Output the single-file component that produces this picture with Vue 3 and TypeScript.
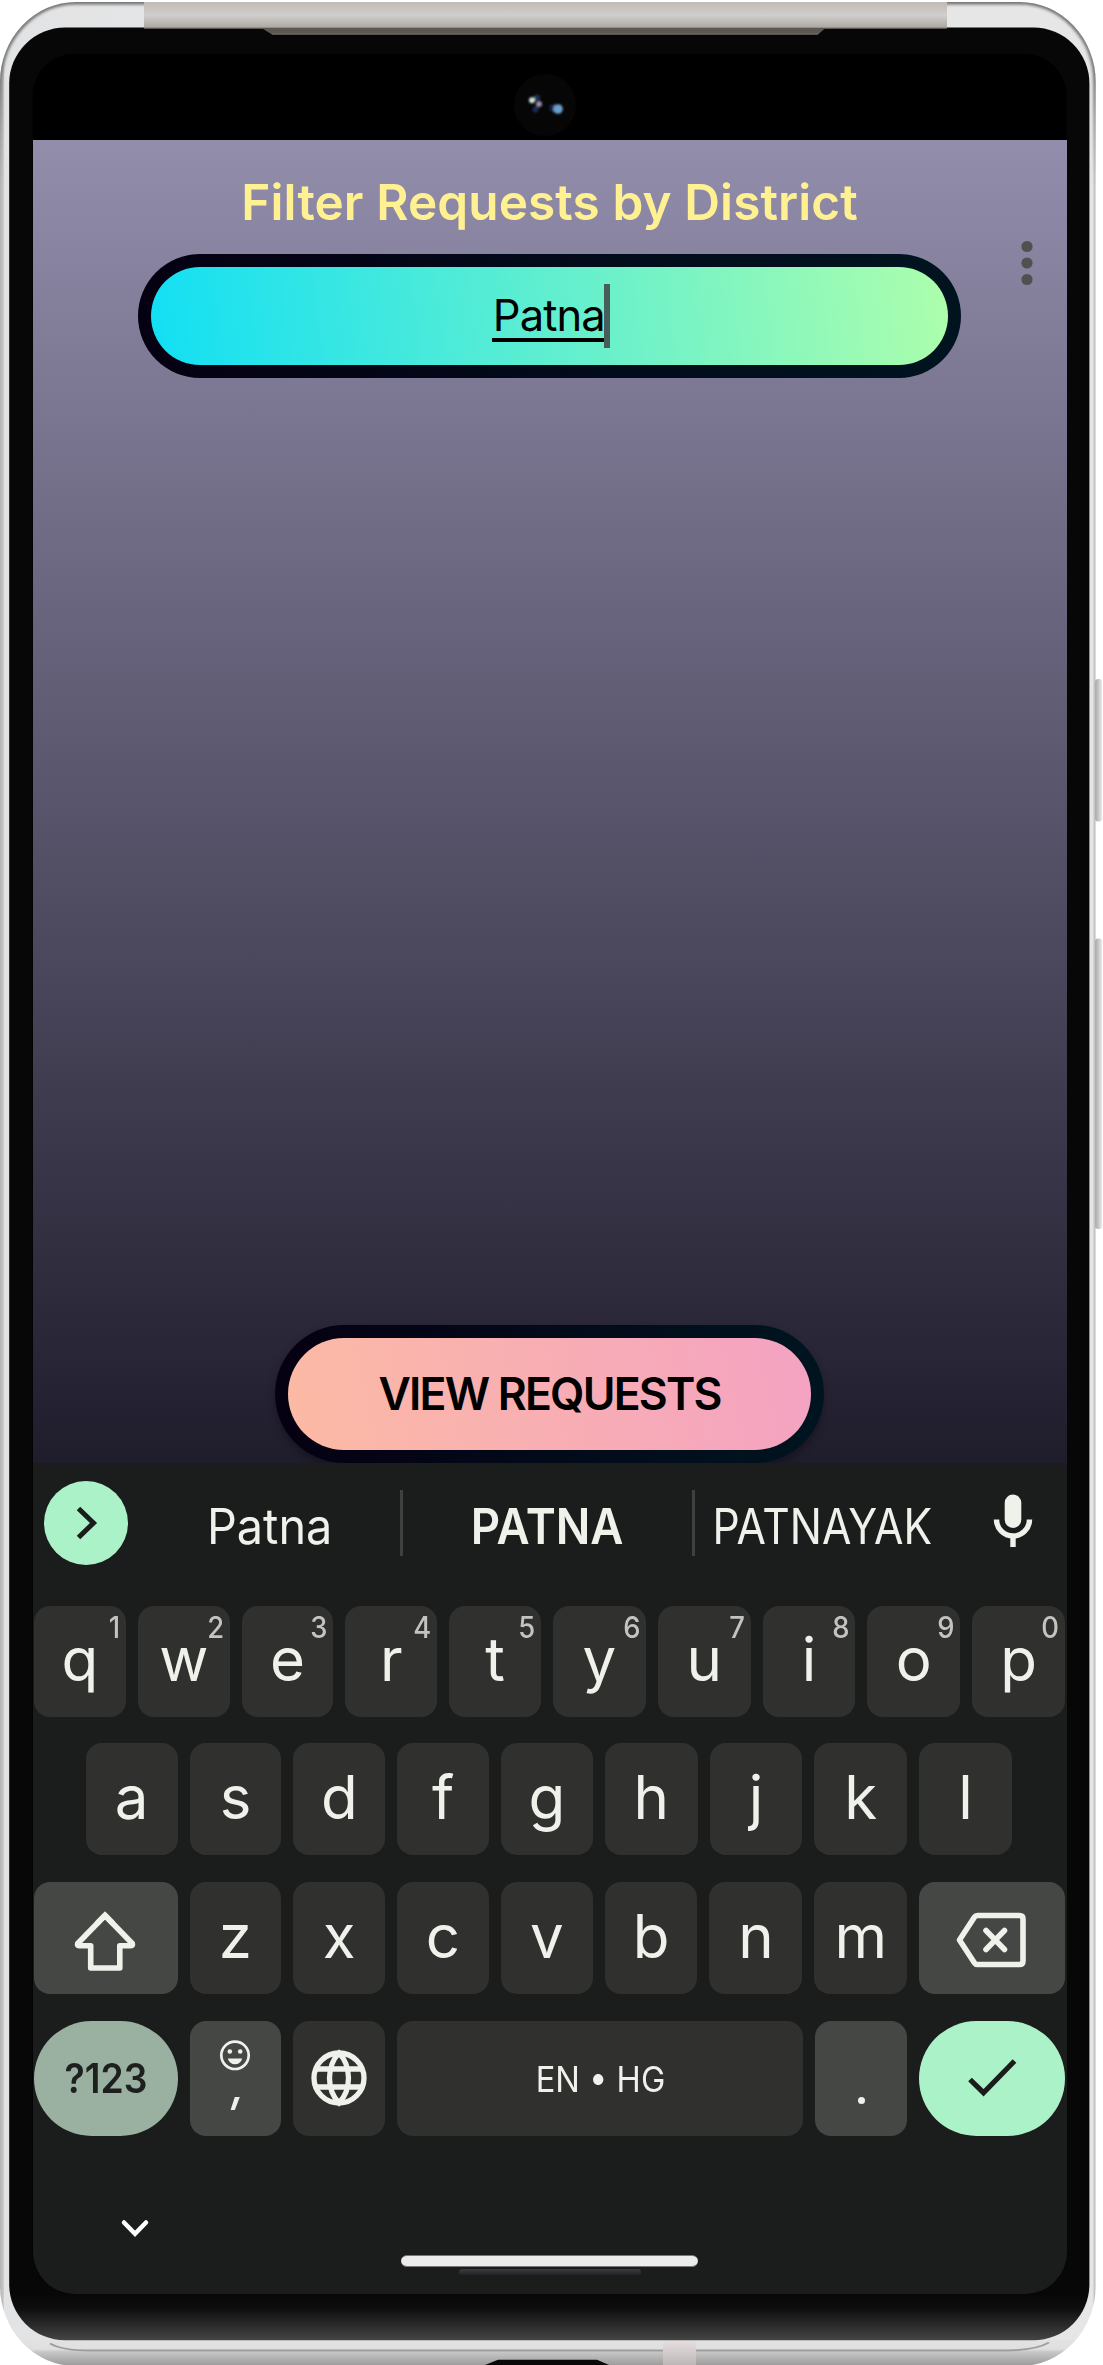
<script setup lang="ts">
interface Key {
  label: string
  hint?: string
}

const topRow: Key[] = 'qwertyuiop'.split('').map((label, i) => ({ label, hint: String((i + 1) % 10) }))
const middleRow: Key[] = 'asdfghjkl'.split('').map((label) => ({ label }))
const bottomRow: Key[] = 'zxcvbnm'.split('').map((label) => ({ label }))
</script>

<template>
  <div class="device">
    <svg class="hardware" width="1103" height="2365" viewBox="0 0 1103 2365" aria-hidden="true">
      <defs>
        <linearGradient id="side" x1="0" x2="1" y1="0" y2="0">
          <stop offset="0" stop-color="#b4b4b4" />
          <stop offset="0.003" stop-color="#c6c6c6" />
          <stop offset="0.004" stop-color="#e2e3e4" />
          <stop offset="0.5" stop-color="#e9e9e9" />
          <stop offset="0.997" stop-color="#e6e6e6" />
          <stop offset="1" stop-color="#b2b2b2" />
        </linearGradient>
        <linearGradient id="rim" gradientUnits="userSpaceOnUse" x1="0" x2="0" y1="2" y2="190">
          <stop offset="0" stop-color="#6f6f6f" />
          <stop offset="0.35" stop-color="#757575" />
          <stop offset="1" stop-color="#9a9a9a" stop-opacity="0" />
        </linearGradient>
        <linearGradient id="chin" x1="0" x2="0" y1="0" y2="1">
          <stop offset="0" stop-color="#e2e2e2" />
          <stop offset="0.35" stop-color="#e0e0e0" />
          <stop offset="0.45" stop-color="#c8c8c8" />
          <stop offset="1" stop-color="#9a9a9a" />
        </linearGradient>
        <linearGradient id="band" x1="0" x2="0" y1="0" y2="1">
          <stop offset="0" stop-color="#c1b9b4" />
          <stop offset="0.5" stop-color="#d0cfcd" />
          <stop offset="1" stop-color="#aaa49d" />
        </linearGradient>
        <linearGradient id="bezel" gradientUnits="userSpaceOnUse" x1="0" x2="0" y1="2294" y2="2340">
          <stop offset="0" stop-color="#070707" />
          <stop offset="0.3" stop-color="#0d0d0d" />
          <stop offset="1" stop-color="#454445" />
        </linearGradient>
        <linearGradient id="button" x1="0" x2="1" y1="0" y2="0">
          <stop offset="0" stop-color="#a6a6a6" />
          <stop offset="0.6" stop-color="#cfcfcf" />
          <stop offset="1" stop-color="#ececec" />
        </linearGradient>
        <linearGradient id="antenna" x1="0" x2="0" y1="0" y2="1">
          <stop offset="0" stop-color="#e6dede" />
          <stop offset="1" stop-color="#bdb7b7" />
        </linearGradient>
        <clipPath id="shell"><rect x="0" y="2" width="1095.7" height="2364" rx="76" ry="80" /></clipPath>
        <filter id="soft"><feGaussianBlur stdDeviation="1.2" /></filter>
        <filter id="edge"><feGaussianBlur stdDeviation="1.5" /></filter>
      </defs>
      <rect x="1095" y="679" width="7.2" height="142.5" rx="3" fill="url(#button)" />
      <rect x="1095" y="938.6" width="7.2" height="290.4" rx="3" fill="url(#button)" />
      <g clip-path="url(#shell)">
        <rect x="0" y="0" width="1095.7" height="2365" fill="url(#side)" />
        <path d="M0 200 V82 A76 80 0 0 1 76 2 H1019.7 A76 80 0 0 1 1095.7 82 V200" fill="none" stroke="url(#rim)" stroke-width="5" filter="url(#edge)" />
        <rect x="0" y="2340" width="1096" height="26" fill="url(#chin)" />
        <path d="M50 2343.500 Q62 2350.500 90 2350.500 H1008 Q1036 2350 1049 2342.500" fill="none" stroke="#9d9d9d" stroke-width="2" />
      </g>
      <rect x="663" y="2341" width="33" height="24" fill="url(#antenna)" />
      <path d="M485 2365 L498 2359.700 H597 L609 2365 Z" fill="#090909" />
      <rect x="9.200" y="27.500" width="1080.200" height="2312.800" rx="56" ry="56" fill="url(#bezel)" />
      <rect x="144" y="2" width="803" height="26.500" fill="url(#band)" />
      <path d="M144 28.200 H947" stroke="#5c5851" stroke-width="1" />
      <path d="M261.500 28 H825.500 L818 34.500 H272 Z" fill="#5c5851" />
      <path d="M272 34 H818" stroke="#77756e" stroke-width="1.200" />
      <rect x="32.500" y="53.700" width="1034.200" height="2240" rx="42" ry="42" fill="#000" />
      <circle cx="545" cy="105" r="31" fill="#060606" />
      <g filter="url(#soft)">
        <circle cx="537" cy="97.500" r="3" fill="#183060" />
        <circle cx="535.500" cy="109.500" r="3" fill="#152c5c" />
        <circle cx="553" cy="108" r="4" fill="#141a45" />
        <circle cx="532" cy="100.300" r="3" fill="#cfe6dd" />
        <circle cx="539" cy="104" r="3" fill="#9a8bb0" />
        <circle cx="558" cy="109" r="4.800" fill="#6aa0cc" />
      </g>
    </svg>

    <div class="screen">
      <main class="app">
        <h1 class="title">Filter Requests by District</h1>
        <div class="pill field">
          <span class="entry">Patna<i class="caret"></i></span>
        </div>
        <svg class="menu" width="14" height="46" viewBox="0 0 14 46" fill="#505050">
          <circle cx="7" cy="6.500" r="5.600" /><circle cx="7" cy="23" r="5.600" /><circle cx="7" cy="39.500" r="5.600" />
        </svg>
        <button class="pill view"><span>VIEW REQUESTS</span></button>
      </main>

      <section class="keyboard">
        <div class="suggestions">
          <span class="expand">
            <svg width="84" height="84" viewBox="0 0 84 84" fill="none" stroke="#1b1d1c" stroke-width="5">
              <path d="M34.500 27.500 L49.500 42 L34.500 56.500" />
            </svg>
          </span>
          <span class="word first"><b>Patna</b></span>
          <i class="divider"></i>
          <span class="word strong"><b>PATNA</b></span>
          <i class="divider"></i>
          <span class="word last"><b>PATNAYAK</b></span>
          <svg class="mic" width="40" height="54" viewBox="0 0 40 54">
            <rect x="11.700" y="0.500" width="16.600" height="33.500" rx="8.300" fill="#eff1eb" />
            <path d="M3.500 25.500 a16.500 16.500 0 0 0 33 0 M20 42 V53" fill="none" stroke="#eff1eb" stroke-width="5.400" />
          </svg>
        </div>

        <div class="row top">
          <span v-for="(key, i) in topRow" :key="key.label" class="key" :class="{ broad: i > 4 }">
            <b>{{ key.label }}</b><small>{{ key.hint }}</small>
          </span>
        </div>

        <div class="row middle">
          <span v-for="(key, i) in middleRow" :key="key.label" class="key" :class="{ broad: i > 4 }"><b>{{ key.label }}</b></span>
        </div>

        <div class="row bottom">
          <span class="key wide special">
            <svg width="66" height="66" viewBox="0 0 66 66" fill="none" stroke="#eff1eb" stroke-width="5.600">
              <path stroke-linejoin="round" d="M32 8.500 L4.700 36.500 Q4 38.800 6 38.800 H17.700 V61 H46.800 V38.800 H58 Q60 38.800 59.300 36.500 Z" />
              <path d="M24 16.500 L32 8.300 L40 16.500" />
            </svg>
          </span>
          <span v-for="(key, i) in bottomRow" :key="key.label" class="key" :class="{ broad: i > 3 }"><b>{{ key.label }}</b></span>
          <span class="key wide last-key special">
            <svg width="72" height="60" viewBox="0 0 72 60" fill="none" stroke="#eff1eb" stroke-width="5.600">
              <path stroke-linejoin="round" d="M4.500 30 L19.500 7 Q20.500 5.500 22.500 5.500 H64.500 Q68 5.500 68 9 V51 Q68 54.500 64.500 54.500 H22.500 Q20.500 54.500 19.500 53 Z" />
              <path stroke-linecap="round" d="M31 20.500 L49.500 39.500 M49.500 20.500 L31 39.500" />
            </svg>
          </span>
        </div>

        <div class="row actions">
          <span class="key wide round symbols"><em>?123</em></span>
          <span class="key special emoji">
            <svg width="40" height="70" viewBox="0 0 40 70" fill="none" stroke="#eff1eb">
              <circle cx="20" cy="12.300" r="13.700" stroke-width="2.700" />
              <circle cx="14.800" cy="8.500" r="2.300" fill="#eff1eb" stroke="none" />
              <circle cx="25.200" cy="8.500" r="2.300" fill="#eff1eb" stroke="none" />
              <path d="M12.800 15.500 H27.200 Q25.500 21.300 20 21.300 Q14.500 21.300 12.800 15.500 Z" fill="#eff1eb" stroke="none" />
              <path d="M19.800 54 H24.800 L19.800 67 H15.600 Z" fill="#eff1eb" stroke="none" />
            </svg>
          </span>
          <span class="key">
            <svg width="58" height="58" viewBox="0 0 58 58" fill="none" stroke="#eff1eb" stroke-width="5.300">
              <circle cx="29" cy="29" r="25" />
              <path d="M29 4 Q19.500 14 19.500 29 T29 54 Q38.500 44 38.500 29 T29 4 Z M6 20 H52 M6 38 H52" />
            </svg>
          </span>
          <span class="key space"><em>EN • HG</em></span>
          <span class="key special dot"><i></i></span>
          <span class="key wide last-key round enter">
            <svg width="54" height="44" viewBox="0 0 54 44" fill="none" stroke="#1b1d1c" stroke-width="5.200">
              <path d="M4 23.500 L17.500 36.700 L48.500 5" />
            </svg>
          </span>
        </div>

        <nav class="nav">
          <svg width="30" height="20" viewBox="0 0 30 20" fill="none" stroke="#fff" stroke-width="4.500" stroke-linecap="round">
            <path d="M4 4.500 L15 15.800 L26 4.500" />
          </svg>
          <i class="home"></i>
          <i class="shade"></i>
        </nav>
      </section>
    </div>
  </div>
</template>

<style>
body {
  background: #fff;
}
</style>

<style scoped>
.device {
  position: relative;
  width: 1103px;
  height: 2365px;
  overflow: hidden;
  box-sizing: border-box;
  padding: 139.500px 36.300px 0 32.500px;
  font-family: Inter, Roboto, sans-serif;
}
.hardware {
  position: absolute;
  left: 0;
  top: 0;
}
.screen {
  position: relative;
  display: flex;
  flex-direction: column;
}
.app {
  position: relative;
  height: 1323.700px;
  display: flex;
  flex-direction: column;
  align-items: center;
  background: linear-gradient(#928dab, #1f1c2c);
  overflow: hidden;
}
.title {
  margin: 32.500px 0 0;
  height: 60px;
  line-height: 60px;
  font-size: 49.500px;
  font-weight: 600;
  letter-spacing: 0.100px;
  white-space: nowrap;
  color: #fff192;
}
.pill {
  box-sizing: border-box;
  display: flex;
  align-items: center;
  justify-content: center;
  border: 13px solid transparent;
  border-radius: 70px;
  color: #000;
}
.field {
  margin-top: 22px;
  margin-right: 1px;
  width: 823px;
  height: 124px;
  background:
    linear-gradient(83deg, #12dff4, #adfeac) padding-box,
    linear-gradient(90deg, #050012, #001420) border-box;
}
.entry {
  position: relative;
  height: 52.500px;
  line-height: 51px;
  font-size: 43.500px;
  font-weight: 400;
  letter-spacing: -0.900px;
  box-sizing: border-box;
  padding-left: 1px;
  margin-right: 1.500px;
  border-bottom: 4px solid #000;
}
.caret {
  position: absolute;
  left: calc(100% - 1px);
  top: -6px;
  width: 6.500px;
  height: 64px;
  background: #465f58;
}
.menu {
  position: absolute;
  right: 32.400px;
  top: 100.500px;
}
.view {
  margin: auto 0 0;
  padding: 0;
  width: 549px;
  height: 138.300px;
  font: 600 44.500px/60px Inter, sans-serif;
  letter-spacing: -1.800px;
  background:
    linear-gradient(78deg, #fcbaa4, #f4a2c2) padding-box,
    linear-gradient(90deg, #050012, #001420) border-box;
  box-shadow: 0 4px 8px rgba(0, 0, 0, 0.3);
}
.keyboard {
  height: 830.500px;
  box-sizing: border-box;
  background: #1b1d1c;
  border-radius: 0 0 42px 42px;
  padding: 18px 1.500px 0;
  display: flex;
  flex-direction: column;
  color: #eff1eb;
}
.suggestions {
  display: flex;
  align-items: center;
  height: 84px;
  padding-left: 9.700px;
  margin-bottom: 40.500px;
}
.expand {
  width: 84px;
  height: 84px;
  border-radius: 50%;
  background: #acf2c8;
}
.expand svg {
  display: block;
}
.word {
  display: flex;
  align-items: center;
  justify-content: center;
  height: 60px;
  padding-top: 6px;
  font-size: 49px;
}
.word b {
  font-weight: 400;
  white-space: nowrap;
}
.first {
  width: 272.300px;
}
.strong {
  width: 289px;
}
.strong b {
  font-weight: 600;
  transform: scaleX(0.93);
}
.last {
  width: 257px;
}
.last b {
  transform: scaleX(0.87);
  margin-right: 2px;
}
.first b {
  margin-left: 12px;
  transform: scaleX(0.955);
}
.divider {
  width: 3px;
  height: 66px;
  background: #3f4140;
}
.mic {
  margin-left: 41px;
  margin-top: -4px;
}
.row {
  display: flex;
  gap: 12px;
}
.key {
  position: relative;
  flex: 0 0 91.800px;
  box-sizing: border-box;
  height: 112px;
  border-radius: 16px;
  background: #30312f;
  display: flex;
  align-items: center;
  justify-content: center;
}
.broad {
  flex-basis: 92.800px;
}
.key b {
  font-size: 60px;
  line-height: 60px;
  font-weight: 400;
  padding-bottom: 4px;
}
.key small {
  position: absolute;
  right: 5.500px;
  top: 5px;
  font-size: 29.500px;
  line-height: 32px;
  font-weight: 500;
  color: #c3c4c0;
  transform: scaleX(0.93);
  transform-origin: right;
}
.key em {
  font-style: normal;
  white-space: nowrap;
  transform: scaleX(0.92);
}
.top .key {
  height: 111px;
}
.middle {
  margin-top: 26.500px;
  padding-left: 51.800px;
}
.bottom {
  margin-top: 27px;
}
.wide {
  flex-basis: 143.500px;
}
.last-key {
  flex-basis: 146px;
}
.special {
  background: #444743;
}
.wide svg {
  display: block;
}
.bottom .wide svg {
  margin-top: 4px;
}
.bottom .last-key svg {
  margin-top: 3px;
  margin-right: 2px;
}
.actions {
  margin-top: 26.700px;
}
.actions .key {
  height: 115px;
}
.actions .round {
  border-radius: 57.500px;
}
.symbols {
  background: #9ab1a1;
  color: #1d201e;
  font-size: 40.500px;
  font-weight: 600;
}
.emoji svg {
  overflow: visible;
}
.space {
  flex: 1;
  font-size: 35.500px;
}
.space em {
  padding-top: 3px;
}
.dot i {
  width: 7.400px;
  height: 7.400px;
  border-radius: 50%;
  background: #eff1eb;
  margin-top: 44px;
}
.enter {
  background: #acf2c8;
}
.enter svg {
  margin-left: 2px;
}
.nav {
  display: flex;
  flex-direction: column;
  align-items: center;
  padding-top: 82px;
}
.nav svg {
  align-self: flex-start;
  margin-left: 86px;
}
.home {
  box-sizing: border-box;
  width: 297px;
  height: 12px;
  margin-top: 17px;
  border-radius: 6px;
  background: #ececec;
  border: solid #777;
  border-width: 1px 0;
}
.shade {
  width: 182px;
  height: 6.500px;
  margin-top: 2px;
  border-radius: 3px;
  background: linear-gradient(#3c3b43, #222325);
}
</style>
